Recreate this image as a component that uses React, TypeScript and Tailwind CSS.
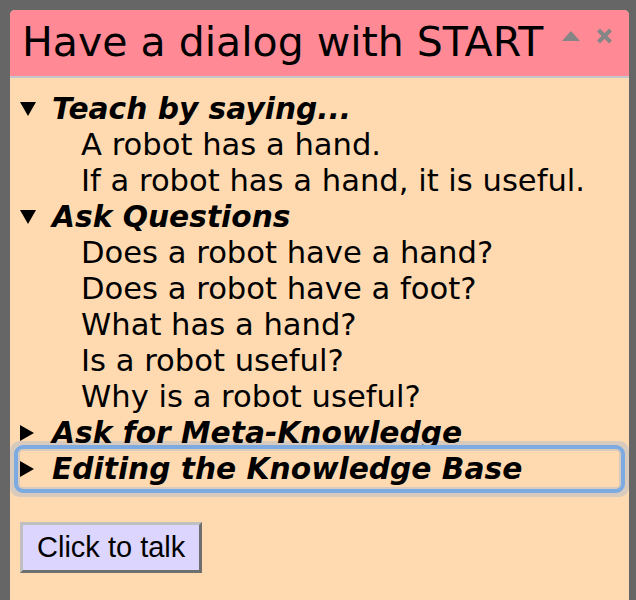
import React from "react";

const sections = [
  {
    title: "Teach by saying...",
    open: true,
    items: ["A robot has a hand.", "If a robot has a hand, it is useful."],
  },
  {
    title: "Ask Questions",
    open: true,
    items: [
      "Does a robot have a hand?",
      "Does a robot have a foot?",
      "What has a hand?",
      "Is a robot useful?",
      "Why is a robot useful?",
    ],
  },
  { title: "Ask for Meta-Knowledge", open: false, items: [] },
  { title: "Editing the Knowledge Base", open: false, items: [], focused: true },
];

const Arrow = ({ open }: { open: boolean }) =>
  open ? (
    <svg width="16" height="14" viewBox="0 0 16 14">
      <polygon points="0,0 16,0 8,14" fill="#000" />
    </svg>
  ) : (
    <svg width="14" height="16" viewBox="0 0 14 16">
      <polygon points="0,0 14,8 0,16" fill="#000" />
    </svg>
  );

export default function App() {
  return (
    <div className="min-h-[600px] bg-[#666666] pt-[10px] pl-[10px] pr-[7px] font-['DejaVu_Sans',sans-serif] text-black">
      <div className="min-h-[590px] bg-[#ffdab0] rounded-t-[5px]">
        <div className="flex items-center h-[68px] bg-[#ff8a96] rounded-t-[5px] border-b-2 border-[#c4c6cc] pl-[12px] pr-[16px]">
          <h1 className="text-[41px] leading-none pb-[2px]">Have a dialog with START</h1>
          <div className="ml-auto flex items-center gap-[16px] self-start mt-[18px]">
            <svg width="18" height="10" viewBox="0 0 18 10">
              <polygon points="9,0 18,10 0,10" fill="#858585" />
            </svg>
            <svg width="17" height="16" viewBox="0 0 17 16">
              <path d="M2.5 2 L14.5 14 M14.5 2 L2.5 14" stroke="#858585" strokeWidth="4" />
            </svg>
          </div>
        </div>

        <div className="pt-[13px] px-[10px]">
          {sections.map((s) => (
            <div key={s.title}>
              <div
                className={
                  "flex items-center h-[36px] " +
                  (s.focused
                    ? "outline-[4px] outline-[#7daae0] outline-offset-[2px] rounded-[3px] shadow-[0_0_0_10px_rgba(127,169,221,0.3)]"
                    : "")
                }
              >
                <div className="w-[32px] flex items-center">
                  <Arrow open={s.open} />
                </div>
                <span className="text-[29.7px] leading-[36px] font-bold italic">{s.title}</span>
              </div>
              {s.items.map((it) => (
                <div key={it} className="pl-[61px] text-[30.6px] leading-[36px]">
                  {it}
                </div>
              ))}
            </div>
          ))}

          <button className="mt-[35px] h-[51px] px-[14px] bg-[#dcd6ff] border-[3px] border-t-[#c0c0c0] border-l-[#c0c0c0] border-b-[#6e6e6e] border-r-[#6e6e6e] font-['Liberation_Sans',Arial,sans-serif] text-[29px] leading-none">
            Click to talk
          </button>
        </div>
      </div>
    </div>
  );
}
